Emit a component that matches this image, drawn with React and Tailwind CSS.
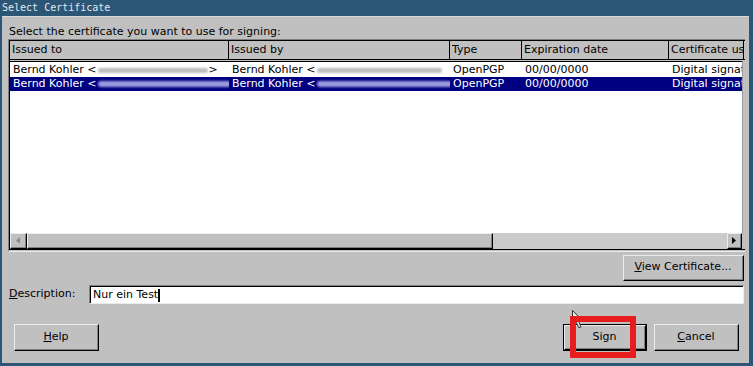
import React from "react";

function Raised({ className = "", children }) {
  return (
    <div className={"border border-t-[#ececec] border-l-[#ececec] border-r-black border-b-black " + className}>
      <div className="h-full w-full border-r border-b border-r-[#808080] border-b-[#808080] flex items-center justify-center">
        {children}
      </div>
    </div>
  );
}

function Streak({ w, sel }) {
  return (
    <span
      className={
        sel
          ? "inline-block h-[6px] align-middle rounded-full bg-[#9a9ae0] blur-[1px] mx-[1px]"
          : "inline-block h-[5px] align-middle rounded-full bg-[#bdbdbd] blur-[1px] mx-[1px]"
      }
      style={{ width: w }}
    />
  );
}

const cols = [219, 221, 72, 147, 75];

function Row({ sel, cells }) {
  return (
    <div className={sel ? "flex h-[14px] bg-[#000080] text-white" : "flex h-[14px] bg-white text-black"}>
      {cells.map((c, i) => (
        <div key={i} className="overflow-hidden whitespace-nowrap pl-[3px] leading-[14px] shrink-0" style={{ width: cols[i] }}>
          {c}
        </div>
      ))}
    </div>
  );
}

export default function App() {
  return (
    <div className="w-[753px] h-[366px] bg-[#2c5676] flex flex-col overflow-hidden font-['DejaVu_Sans',sans-serif] text-[11px] text-black">
      <div className="h-[16px] pl-[2px] flex items-center text-[10px] text-[#e8e8e8] font-['DejaVu_Sans_Mono',monospace] leading-none">
        Select Certificate
      </div>
      <div className="relative ml-[2px] w-[747px] h-[347px] bg-[#c0c0c0] border-t border-t-[#d8d8d8] flex flex-col">
        <div className="mt-[8px] pl-[7px] h-[13px] leading-[13px]">Select the certificate you want to use for signing:</div>

        {/* table frame */}
        <div className="mt-[1px] ml-[6px] w-[737px] border-t border-l border-t-[#808080] border-l-[#808080] border-b border-b-[#ececec] pb-[1px]">
          <div className="border-t border-l border-b border-black w-[736px] h-[210px] flex flex-col">
            {/* header */}
            <div className="flex h-[19px] border-b border-black bg-[#c0c0c0]">
              {["Issued to", "Issued by", "Type", "Expiration date", "Certificate us"].map((h, i) => (
                <div key={i} className="shrink-0 border-r border-black pl-[2px] leading-[18px] overflow-hidden whitespace-nowrap" style={{ width: cols[i] }}>
                  {h}
                </div>
              ))}
            </div>
            <div className="h-[1px] bg-[#c0c0c0]" />
            {/* list */}
            <div className="flex h-[172px]">
              <div className="w-[732px] bg-white border-t border-black pt-[1px] flex flex-col">
                <Row
                  cells={[
                    <span>Bernd Kohler &lt;<Streak w={110} />&gt;</span>,
                    <span>Bernd Kohler &lt;<Streak w={125} /></span>,
                    "OpenPGP",
                    "00/00/0000",
                    "Digital signat",
                  ]}
                />
                <Row
                  sel
                  cells={[
                    <span>Bernd Kohler &lt;<Streak w={140} sel /></span>,
                    <span>Bernd Kohler &lt;<Streak w={140} sel /></span>,
                    "OpenPGP",
                    "00/00/0000",
                    "Digital signat",
                  ]}
                />
              </div>
              <div className="w-[1px] bg-[#9c9c9c]" />
              <div className="flex-1 bg-[#c0c0c0]" />
            </div>
            {/* scrollbar */}
            <div className="flex h-[16px] bg-[#c0c0c0]">
              <Raised className="w-[17px] h-full">
                <svg width="4" height="7" viewBox="0 0 4 7">
                  <path d="M4 0 L0 3.5 L4 7 Z" fill="#8a8a8a" />
                </svg>
              </Raised>
              <Raised className="w-[466px] h-full" />
              <div className="w-[234px] h-full bg-[#cbcbcb]" />
              <Raised className="w-[15px] h-full">
                <svg width="4" height="7" viewBox="0 0 4 7">
                  <path d="M0 0 L4 3.5 L0 7 Z" fill="#000" />
                </svg>
              </Raised>
              <div className="flex-1" />
            </div>
          </div>
        </div>

        {/* view certificate */}
        <div className="mt-[3px] flex justify-end mr-[5px]">
          <Raised className="w-[121px] h-[26px]">
            <span>
              <span className="underline">V</span>iew Certificate...
            </span>
          </Raised>
        </div>

        {/* description */}
        <div className="mt-[4px] flex items-center h-[19px] mr-[5px]">
          <div className="pl-[7px] w-[87px] shrink-0">
            <span className="underline">D</span>escription:
          </div>
          <div className="flex-1 h-full border-t border-l border-t-[#808080] border-l-[#808080] border-b border-r border-b-[#ececec] border-r-[#ececec]">
            <div className="h-full bg-white border-t border-l border-black flex items-center pl-[2px]">
              <span>Nur ein Test</span>
              <span className="inline-block w-[2px] h-[13px] bg-black" />
            </div>
          </div>
        </div>

        {/* buttons */}
        <div className="mt-[20px] flex h-[27px]">
          <Raised className="ml-[12px] w-[85px] h-full">
            <span>
              <span className="underline">H</span>elp
            </span>
          </Raised>
          <div className="flex-1" />
          <div className="w-[84px] h-full border border-black">
            <Raised className="w-full h-full">
              <span>Sign</span>
            </Raised>
          </div>
          <Raised className="ml-[7px] mr-[10px] w-[85px] h-full">
            <span>
              <span className="underline">C</span>ancel
            </span>
          </Raised>
        </div>

        {/* mouse cursor */}
        <svg className="absolute left-[570px] top-[293px]" width="13" height="19" viewBox="0 0 13 19">
          <path d="M0.5 0.5 L0.5 15 L4 11.5 L6.8 17.8 L9 16.8 L6.3 10.8 L11 10.8 Z" fill="#e8e8e8" stroke="#333" strokeWidth="1" />
        </svg>

        {/* red highlight */}
        <div className="absolute left-[568px] top-[299px] w-[66px] h-[42px] border-[6px] border-[#e81c1c]" />
      </div>
    </div>
  );
}
